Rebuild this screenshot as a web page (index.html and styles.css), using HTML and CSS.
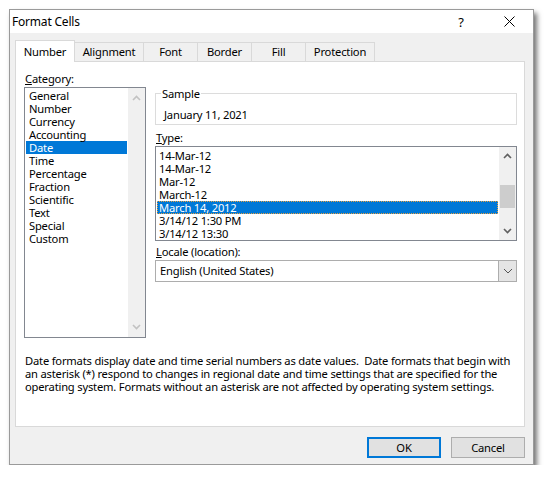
FILE: index.html
```html
<!DOCTYPE html>
<html lang="en">
<head>
<meta charset="utf-8">
<title>Format Cells</title>
<link rel="stylesheet" href="styles.css">
</head>
<body>
<div class="window">
  <div class="titlebar">
    <span class="title">Format Cells</span>
    <span class="help">?</span>
    <span class="close"><svg width="11" height="11" viewBox="0 0 11 11"><path d="M0.5 0.5 L10.5 10.5 M10.5 0.5 L0.5 10.5" stroke="#000" stroke-width="1" fill="none"/></svg></span>
  </div>
  <div class="client">
    <div class="tabs">
      <div class="tab selected">Number</div>
      <div class="tab w69">Alignment</div>
      <div class="tab w54">Font</div>
      <div class="tab w54">Border</div>
      <div class="tab w54">Fill</div>
      <div class="tab w69">Protection</div>
    </div>
    <div class="panel">
      <div class="main">
        <div class="col-left">
          <div class="label"><u>C</u>ategory:</div>
          <div class="listbox cat">
            <ul class="items">
              <li>General</li>
              <li>Number</li>
              <li>Currency</li>
              <li>Accounting</li>
              <li class="sel">Date</li>
              <li>Time</li>
              <li>Percentage</li>
              <li>Fraction</li>
              <li>Scientific</li>
              <li>Text</li>
              <li>Special</li>
              <li>Custom</li>
            </ul>
            <div class="vscroll disabled">
              <svg class="arrow" width="9" height="6" viewBox="0 0 9 6"><path d="M1 5 L4.5 1.5 L8 5" stroke="#c2c2c2" stroke-width="1.6" fill="none"/></svg>
              <div class="track"></div>
              <svg class="arrow" width="9" height="6" viewBox="0 0 9 6"><path d="M1 1 L4.5 4.5 L8 1" stroke="#c2c2c2" stroke-width="1.6" fill="none"/></svg>
            </div>
          </div>
        </div>
        <div class="col-right">
          <fieldset class="sample">
            <legend>Sample</legend>
            <div class="sample-value">January 11, 2021</div>
          </fieldset>
          <div class="label type-label"><u>T</u>ype:</div>
          <div class="listbox type">
            <ul class="items">
              <li>14-Mar-12</li>
              <li>14-Mar-12</li>
              <li>Mar-12</li>
              <li>March-12</li>
              <li class="sel focus">March 14, 2012</li>
              <li>3/14/12 1:30 PM</li>
              <li>3/14/12 13:30</li>
            </ul>
            <div class="vscroll">
              <svg class="arrow" width="9" height="6" viewBox="0 0 9 6"><path d="M1 5 L4.5 1.5 L8 5" stroke="#606060" stroke-width="1.6" fill="none"/></svg>
              <div class="track"><div class="thumb"></div></div>
              <svg class="arrow" width="9" height="6" viewBox="0 0 9 6"><path d="M1 1 L4.5 4.5 L8 1" stroke="#606060" stroke-width="1.6" fill="none"/></svg>
            </div>
          </div>
          <div class="label locale-label"><u>L</u>ocale (location):</div>
          <div class="combo">
            <span class="combo-text">English (United States)</span>
            <span class="combo-btn"><svg width="10" height="6" viewBox="0 0 10 6"><path d="M1 1 L5 5 L9 1" stroke="#555" stroke-width="1" fill="none"/></svg></span>
          </div>
        </div>
      </div>
      <p class="desc">Date formats display date and time serial numbers as date values.&nbsp; Date formats that begin with<br>an asterisk (*) respond to changes in regional date and time settings that are specified for the<br>operating system. Formats without an asterisk are not affected by operating system settings.</p>
    </div>
    <div class="buttons">
      <button class="btn default">OK</button>
      <button class="btn">Cancel</button>
    </div>
  </div>
</div>
</body>
</html>
```

FILE: styles.css
```css
* { box-sizing: border-box; }
html, body { margin: 0; padding: 0; background: #ffffff; }
body {
  font-family: "Noto Sans", "Open Sans", sans-serif;
  font-size: 11.2px;
  letter-spacing: -0.2px;
  color: #000;
}
.window {
  margin: 9px 0 0 9px;
  width: 525px;
  height: 456px;
  border: 1px solid #9a9a9a;
  background: #f0f0f0;
  box-shadow: 3px 4px 5px rgba(0,0,0,0.55);
  display: flex;
  flex-direction: column;
}
.titlebar {
  height: 23px;
  background: #ffffff;
  display: flex;
  align-items: center;
  padding-left: 2px;
  font-size: 12px;
}
.title { flex: 1; }
.help { width: 14px; margin-right: 36px; font-size: 13px; text-align: center; }
.close { width: 11px; height: 11px; margin-right: 18px; display: flex; }
.client {
  flex: 1;
  padding: 7px 0 0 5px;
}
.tabs {
  display: flex;
  align-items: flex-end;
  height: 21px;
}
.tab {
  width: 60px;
  height: 19px;
  border: 1px solid #d9d9d9;
  border-bottom: none;
  margin-left: -1px;
  background: #f0f0f0;
  text-align: center;
  line-height: 18px;
}
.tab:first-child { margin-left: 0; }
.tab.selected {
  height: 22px;
  margin-bottom: -1px;
  background: #ffffff;
  position: relative;
  line-height: 21px;
}
.w69 { width: 70px; }
.w54 { width: 55px; }
.panel {
  width: 510px;
  height: 366px;
  background: #ffffff;
  border: 1px solid #d9d9d9;
  padding: 10px 0 0 8px;
}
.main { display: flex; gap: 9px; }
.col-left { width: 122px; display: flex; flex-direction: column; }
.col-right { width: 362px; display: flex; flex-direction: column; padding-top: 15px; }
.label { height: 13px; line-height: 13px; margin-bottom: 2px; padding-left: 1px; }
.label u { text-decoration-thickness: 1px; text-underline-offset: 1px; }
.listbox {
  border: 1px solid #828790;
  background: #fff;
  display: flex;
}
.listbox.cat { height: 251px; }
.listbox.type { height: 95px; }
.items {
  list-style: none;
  margin: 0;
  flex: 1;
  line-height: 13px;
  white-space: nowrap;
}
.cat .items { padding: 1px 1px 0 1px; }
.cat .items li { padding-left: 3px; height: 13px; }
.type .items { padding: 2px 1px 0 1px; }
.type .items li { padding-left: 2px; height: 13px; }
.items li.sel { background: #0078d7; color: #fff; }
.items li.focus { outline: 1px dotted #e8a040; outline-offset: -1px; }
.vscroll {
  width: 17px;
  background: #f0f0f0;
  display: flex;
  flex-direction: column;
  align-items: center;
}
.vscroll .arrow { flex: none; }
.vscroll .track { flex: 1; width: 100%; }
.type .vscroll .arrow:first-child { margin: 6px 0 0; }
.type .vscroll .arrow:last-child { margin: 0 0 6px; }
.thumb { margin-top: 26px; height: 23px; width: 15px; margin-left: 1px; background: #cdcdcd; }
.cat .vscroll .arrow:first-child { margin: 7px 0 0; }
.cat .vscroll .arrow:last-child { margin: 0 0 7px; }
.sample {
  margin: 0;
  border: 1px solid #dcdcdc;
  padding: 8px 0 3px 5px;
  height: 38px;
}
.sample legend { padding: 0 1px; line-height: 13px; }
.sample-value { line-height: 13px; padding-left: 3px; }
.type-label { margin-top: 6px; }
.locale-label { margin-top: 4px; }
.combo {
  height: 22px;
  border: 1px solid #adadad;
  display: flex;
  background: #fff;
}
.combo-text { flex: 1; line-height: 20px; padding-left: 4px; }
.combo-btn {
  width: 18px;
  background: #e5e5e5;
  border-left: 1px solid #adadad;
  display: flex;
  align-items: center;
  justify-content: center;
}
.desc {
  margin: 16px 0 0 1px;
  line-height: 13px;
  white-space: nowrap;
}
.buttons {
  display: flex;
  justify-content: flex-end;
  gap: 10px;
  width: 510px;
  margin-top: 10px;
}
.btn {
  width: 74px;
  height: 21px;
  font: inherit;
  letter-spacing: inherit;
  background: #e1e1e1;
  border: 1px solid #adadad;
  padding: 0;
  color: #000;
}
.btn.default { border: 2px solid #0078d7; }
```
